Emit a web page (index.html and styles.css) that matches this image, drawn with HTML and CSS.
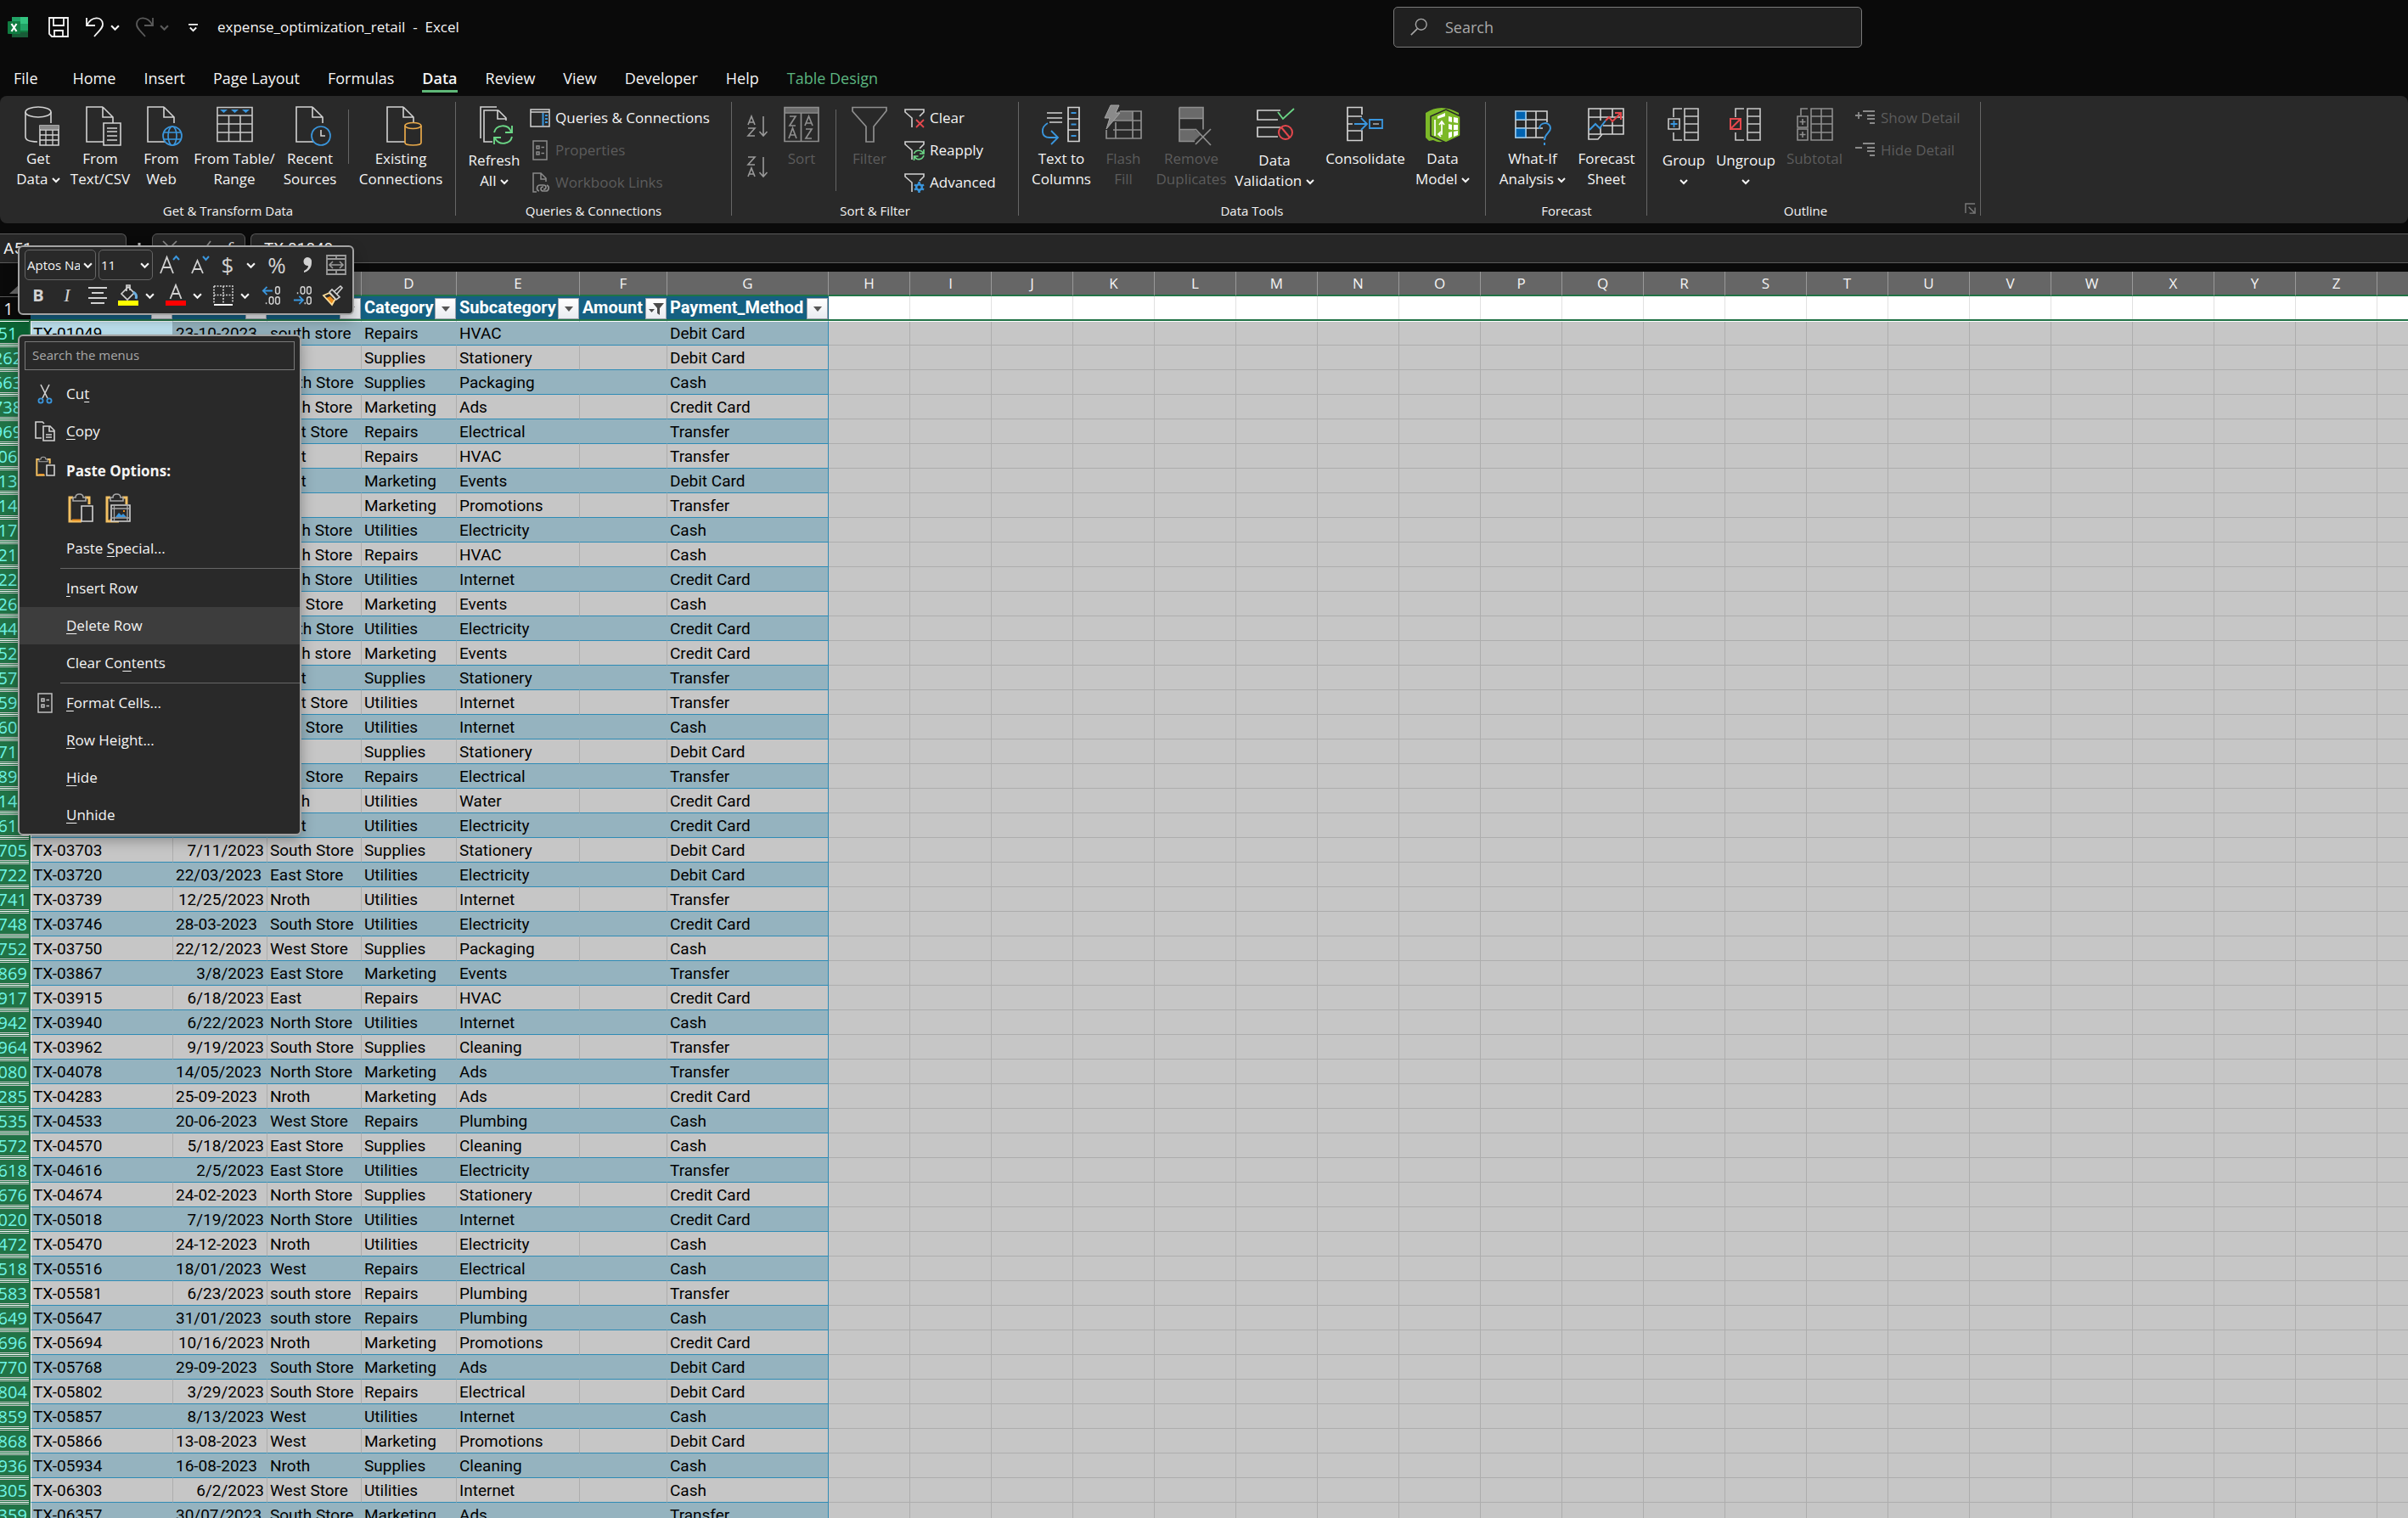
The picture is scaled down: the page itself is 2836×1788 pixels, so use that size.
FILE: index.html
```html
<!DOCTYPE html>
<html lang="en">
<head>
<meta charset="utf-8">
<title>expense_optimization_retail - Excel</title>
<link rel="stylesheet" href="styles.css">
</head>
<body>
<svg class="sprite" aria-hidden="true">
  <symbol id="chev" viewBox="0 0 10 10"><path d="M1 3l4 4 4-4" fill="none" stroke="currentColor" stroke-width="2"/></symbol>
  <symbol id="page" viewBox="0 0 48 48"><path d="M27 2H8v41h21M27 2l12 12v7M27 2v12h12" fill="none" stroke="#d2d2d2" stroke-width="1.6"/></symbol>
  <symbol id="clip" viewBox="0 0 30 36"><path d="M6 6H2v28h14" fill="none" stroke="#f2c063" stroke-width="3"/><path d="M20 6h5v8" fill="none" stroke="#f2c063" stroke-width="3"/><path d="M5 32.500h10" stroke="#e88b1c" stroke-width="2"/><path d="M6 10h15V6h-3q0-4-4.500-4T9 6H6z" fill="#292929" stroke="#a8a8a8" stroke-width="1.600"/></symbol>
  <symbol id="funnel" viewBox="0 0 24 24"><path d="M9 23V12L1 5V2h22v3l-5 5" fill="none" stroke="#d2d2d2" stroke-width="1.600"/></symbol>
</svg>

<header class="titlebar">
  <div class="quick">
    <svg class="logo" viewBox="0 0 24 24"><path d="M5 0h10v8H5z" fill="#21a366"/><path d="M15 0h9v8h-9z" fill="#33c481"/><path d="M5 8h10v8H5z" fill="#107c41"/><path d="M15 8h9v8h-9z" fill="#21a366"/><path d="M5 16h19v8H5z" fill="#185c37"/><path d="M15 16h9v2h-9z" fill="#107c41"/><rect y="5" width="15" height="15" rx="1" fill="#107c41"/><path d="M4.500 8l6 9M10.500 8l-6 9" stroke="#fff" stroke-width="2.200"/></svg>
    <button class="qa save" aria-label="Save"><svg viewBox="0 0 24 24"><path d="M1 1h22v22H4l-3-3zM6 1v9h12V1M7 23v-7h10v7" fill="none" stroke="#f4f4f4" stroke-width="1.800"/></svg></button>
    <button class="qa" aria-label="Undo"><svg viewBox="0 0 24 24"><path d="M2 1v9h10M2.500 9.500C8-1 20-1 21 8c.5 5-4 8-10 15" fill="none" stroke="#f4f4f4" stroke-width="1.800"/></svg></button>
    <button class="drop" aria-label="Undo list"><svg><use href="#chev"/></svg></button>
    <button class="qa off" aria-label="Redo"><svg viewBox="0 0 24 24"><path d="M22 1v9H12M21.500 9.500C16-1 4-1 3 8c-.5 5 4 8 10 15" fill="none" stroke="#5a5a5a" stroke-width="1.800"/></svg></button>
    <button class="drop off" aria-label="Redo list"><svg><use href="#chev"/></svg></button>
    <button class="drop custom" aria-label="Customize toolbar"><svg viewBox="0 0 12 12"><path d="M0 2h12M2 6l4 4 4-4" fill="none" stroke="#f4f4f4" stroke-width="2"/></svg></button>
    <h1>expense_optimization_retail&nbsp; - &nbsp;Excel</h1>
  </div>
  <label class="search"><svg viewBox="0 0 24 24"><ellipse cx="15" cy="8.500" rx="7" ry="7" fill="none" stroke="#a8a8a8" stroke-width="1.500"/><path d="M10 14l-8 8" stroke="#a8a8a8" stroke-width="1.700"/></svg><input type="search" placeholder="Search" aria-label="Search"></label>
</header>

<nav class="tabs">
  <a href="#file" class="file">File</a><a href="#home">Home</a><a href="#insert">Insert</a><a href="#layout">Page Layout</a><a href="#formulas">Formulas</a><a href="#data" class="on">Data</a><a href="#review">Review</a><a href="#view">View</a><a href="#developer">Developer</a><a href="#help">Help</a><a href="#design" class="ctx">Table Design</a>
</nav>

<div class="ribbon">
  <section class="group get">
    <div class="tools">
      <button class="big"><svg viewBox="0 0 48 48"><g fill="none" stroke="#d2d2d2" stroke-width="1.600"><ellipse cx="24" cy="8" rx="15" ry="6"/><path d="M9 8v29c0 4 5 6 14 6M39 8v13"/></g><path d="M26 24h22v23H26z" fill="#292929" stroke="#d2d2d2" stroke-width="1.600"/><path d="M26 24h22v4H26z" fill="#8a8a8a"/><path d="M26 29h22M26 35h22M26 41h22M33 29v18M41 29v18" stroke="#d2d2d2" stroke-width="1.300"/></svg><span>Get<br>Data <svg class="c"><use href="#chev"/></svg></span></button>
      <button class="big"><svg viewBox="0 0 48 48"><use href="#page"/><path d="M28 21h20v26H28z" fill="#292929" stroke="#d2d2d2" stroke-width="1.600"/><path d="M32 27h12M32 31h12M32 36h12M32 41h12" stroke="#d2d2d2" stroke-width="1.300"/></svg><span>From<br>Text/CSV</span></button>
      <button class="big"><svg viewBox="0 0 48 48"><use href="#page"/><g fill="#292929" stroke="#3a96dd" stroke-width="1.700"><circle cx="37" cy="36" r="11"/><ellipse cx="37" cy="36" rx="5" ry="11"/><path d="M27 32h20M27 40h20"/></g></svg><span>From<br>Web</span></button>
      <button class="big"><svg viewBox="0 0 48 48"><path d="M4 2.500h41v40H4zM4 12h41M4 22h41M4 32h41M17.500 12v31M31 12v31" fill="none" stroke="#c8c8c8" stroke-width="1.600"/><path d="M7 5h9l-4.500 4zM20 5h9l-4.500 4zM33 5h9l-4.500 4z" fill="#3a96dd"/></svg><span>From Table/<br>Range</span></button>
      <button class="big"><svg viewBox="0 0 48 48"><use href="#page"/><circle cx="37" cy="36" r="11" fill="#292929" stroke="#3a96dd" stroke-width="1.700"/><path d="M37 29v7h5" fill="none" stroke="#d2d2d2" stroke-width="1.600"/></svg><span>Recent<br>Sources</span></button>
      <i class="bar short"></i>
      <button class="big"><svg viewBox="0 0 48 48"><use href="#page"/><g fill="#292929" stroke="#e8a94a" stroke-width="1.700"><path d="M29 24v20c0 4 19 4 19 0V24"/><ellipse cx="38.500" cy="24" rx="9.500" ry="3.500"/></g></svg><span>Existing<br>Connections</span></button>
    </div>
    <h2>Get &amp; Transform Data</h2>
  </section>

  <section class="group queries">
    <div class="tools">
      <button class="big split"><svg viewBox="0 0 48 48"><g fill="none" stroke="#d2d2d2" stroke-width="1.600"><path d="M27 2H8v37M29 6H12v37h10M29 6l9 9v3M28 6v10h10"/></g><g fill="none" stroke="#6bd686" stroke-width="1.900"><path d="M24 32c2-9 16-11 20-1M45 37c-2 9-15 11-20 2"/><path d="M45 24v8h-8M24 46v-8h8"/></g></svg><span>Refresh<br>All <svg class="c"><use href="#chev"/></svg></span></button>
      <div class="stack">
        <button class="small"><svg viewBox="0 0 24 24"><path d="M1 2h22v20H1zM1 5h22" fill="none" stroke="#d2d2d2" stroke-width="1.500"/><path d="M15.500 6v15" stroke="#3a96dd" stroke-width="2"/><path d="M18 9h3M18 13h3M18 17h3" stroke="#3a96dd" stroke-width="2"/></svg>Queries &amp; Connections</button>
        <button class="small" disabled><svg viewBox="0 0 24 24"><path d="M4 1h16v22H4zM8 7h3v3H8zM8 14h3v3H8zM13.500 8.500H17M13.500 15.500H17" fill="none" stroke="#8a8a8a" stroke-width="1.500"/></svg>Properties</button>
        <button class="small" disabled><svg viewBox="0 0 24 24"><path d="M8 23H4V1h9l6 6v4M13 1v7h6" fill="none" stroke="#8a8a8a" stroke-width="1.500"/><path d="M11 22c-4-1-3-7 1-7h4c4 0 4 5 0 5M20 15c4 2 2 7-1 7h-3c-4 0-4-5 0-5" fill="none" stroke="#8a8a8a" stroke-width="1.700"/></svg>Workbook Links</button>
      </div>
    </div>
    <h2>Queries &amp; Connections</h2>
  </section>

  <section class="group sort">
    <div class="tools">
      <div class="order">
        <button aria-label="Sort A to Z"><svg viewBox="0 0 26 28"><g fill="none" stroke="#9a9a9a" stroke-width="1.600"><path d="M2 12L6 2l4 10M3 9h6M2 16h8l-8 9h8M20 2v22M15.500 20l4.500 5 4.500-5"/></g></svg></button>
        <button aria-label="Sort Z to A"><svg viewBox="0 0 26 28"><g fill="none" stroke="#9a9a9a" stroke-width="1.600"><path d="M2 2h8l-8 9h8M2 25l4-10 4 10M3 22h6M20 2v22M15.500 20l4.500 5 4.500-5"/></g></svg></button>
      </div>
      <button class="big" disabled><svg viewBox="0 0 48 48"><path d="M4 2.500h40v6H4z" fill="#6a6a6a"/><g fill="none" stroke="#8e8e8e" stroke-width="1.700"><path d="M4 2.500h40v40H4zM4 9h40M23.500 9v33"/><path d="M10 13h7l-7 11h7M9 39l4.500-12L18 39M10.500 35h6M28 24l4.500-11L37 24M29.500 21h6M29 28h7l-7 11h7"/></g></svg><span>Sort</span></button>
      <i class="bar"></i>
      <button class="big" disabled><svg viewBox="0 0 48 48"><path d="M4 2.500h40v4L29 25v18h-9V25L4 7z" fill="none" stroke="#8e8e8e" stroke-width="1.700"/></svg><span>Filter</span></button>
      <div class="stack">
        <button class="small"><svg viewBox="0 0 24 24"><use href="#funnel"/><path d="M14 14l9 9M23 14l-9 9" stroke="#e5484d" stroke-width="1.800"/></svg>Clear</button>
        <button class="small"><svg viewBox="0 0 24 24"><use href="#funnel"/><path d="M11.500 16c2-5 9-5 11 0M23 18c-2 6-9 6-11 1M23 11v5h-5M11.500 24v-5h5" fill="none" stroke="#6bd686" stroke-width="1.700"/></svg>Reapply</button>
        <button class="small"><svg viewBox="0 0 24 24"><use href="#funnel"/><circle cx="17.500" cy="17.500" r="3.300" fill="none" stroke="#3a96dd" stroke-width="2.400"/><path d="M17.500 11v3M17.500 21v3M12 14.500l2.500 1.500M20.500 19l2.500 1.500M12 20.500l2.500-1.500M20.500 16l2.500-1.500" stroke="#3a96dd" stroke-width="2.600"/></svg>Advanced</button>
      </div>
    </div>
    <h2>Sort &amp; Filter</h2>
  </section>

  <section class="group data">
    <div class="tools">
      <button class="big"><svg viewBox="0 0 48 48"><path d="M7 9h18M7 15h18M10 20h15M32 2.500h13v40H32zM32 16h13M32 29h13" fill="none" stroke="#d2d2d2" stroke-width="1.700"/><path d="M35.500 9h6M35.500 22.500h6M35.500 36h6M8 21C-1 26 0 38 10 38h9M12 30l8 8-8 8" fill="none" stroke="#3a96dd" stroke-width="1.800"/></svg><span>Text to<br>Columns</span></button>
      <button class="big" disabled><svg viewBox="0 0 48 48"><path d="M18 7h17v11H13z" fill="#6a6a6a"/><path d="M20 7h25v32H4V29M12 18h33M12 29h33M15 20v19M35 7v32" fill="none" stroke="#8e8e8e" stroke-width="1.700"/><path d="M9 0h10l-4 9h5L4 28l4-13H2z" fill="#8a8a8a" stroke="#a5a5a5"/></svg><span>Flash<br>Fill</span></button>
      <button class="big" disabled><svg viewBox="0 0 48 48"><path d="M10 2.500h28v13H10zM10 29h18l7 6-8 7.500H10z" fill="#6a6a6a"/><path d="M10 2.500h28v26M10 2.500v40h18M10 15.500h28M10 28.500h20M29 28l18 19M47 28L29 46" fill="none" stroke="#8e8e8e" stroke-width="1.700"/></svg><span>Remove<br>Duplicates</span></button>
      <button class="big split"><svg viewBox="0 0 48 48"><path d="M31 6H4v11h24M31 26H4v11h24" fill="none" stroke="#d2d2d2" stroke-width="1.700"/><path d="M28 8l6 8L47 4" fill="none" stroke="#6bd686" stroke-width="1.800"/><circle cx="37" cy="32" r="8" fill="none" stroke="#e5484d" stroke-width="2"/><path d="M32 26l10 12" stroke="#e5484d" stroke-width="2"/></svg><span>Data<br>Validation <svg class="c"><use href="#chev"/></svg></span></button>
      <button class="big"><svg viewBox="0 0 48 48"><path d="M20 11V2.500H3v39h17V30H3M3 13h17M3 22h6" fill="none" stroke="#d2d2d2" stroke-width="1.700"/><path d="M11 22h15M19 15l7 7-7 7M29 17h15v10H29z" fill="none" stroke="#3a96dd" stroke-width="1.800"/><path d="M33 22h7" stroke="#a8a8a8" stroke-width="1.600"/></svg><span>Consolidate</span></button>
      <button class="big"><svg viewBox="0 0 48 48"><path d="M4 9q18-12 39 0v26L26 43h-4q-3 1-9-2l-5 1-4-4z" fill="#7cb928"/><path d="M10 13L28 5l17 8v23l-17 8-18-8z" fill="#7cb928" stroke="#292929" stroke-width="1.500"/><path d="M31 13l4 1v6l-4-1zM37 14l5 1v6l-5-1zM31 22l4 1v6l-4-1zM37 23l5 0v6l-5 0zM31 32l4-1v6l-4 2zM37 31l5-1v5l-5 2zM18 13l9-4v4l-9 3z" fill="#fff"/><path d="M15 17v19M20 34h3V20M20 23l3-4 3 4M22 31l-3 3 3 3" fill="none" stroke="#fff" stroke-width="1.700"/></svg><span>Data<br>Model <svg class="c"><use href="#chev"/></svg></span></button>
    </div>
    <h2>Data Tools</h2>
  </section>

  <section class="group forecast">
    <div class="tools">
      <button class="big"><svg viewBox="0 0 48 48"><path d="M41 20V7H4v31h33M4 17h37M4 27h32M28 7v31M16 7v31" fill="none" stroke="#d2d2d2" stroke-width="1.600"/><path d="M4 7h12v10H4zM4 27h12v11H4z" fill="#0063b1" stroke="#8fc4ea" stroke-width="1.600"/><path d="M32 28c0-9 13-9 13-1 0 6-7 6-7 14M38 44v3" fill="none" stroke="#3a96dd" stroke-width="2"/></svg><span>What-If<br>Analysis <svg class="c"><use href="#chev"/></svg></span></button>
      <button class="big"><svg viewBox="0 0 48 48"><path d="M3 4h41v30H3zM3 14h41M17 4v14M31 4v10M31 20v14M17 26v8M20 24h24M3 34v6h11l5-6" fill="none" stroke="#d2d2d2" stroke-width="1.600"/><path d="M4 29l7-7 5 5 7-9" fill="none" stroke="#3a96dd" stroke-width="2"/><path d="M23 18l4-4 4 5 10-10M34 9h7v8" fill="none" stroke="#e5484d" stroke-width="2"/></svg><span>Forecast<br>Sheet</span></button>
    </div>
    <h2>Forecast</h2>
  </section>

  <section class="group outline">
    <div class="tools">
      <button class="big split"><svg viewBox="0 0 48 48"><path d="M25 4h16v37H25zM25 13h16M25 22h16M25 32h16M22 4H12v10M12 32v9h10M6 16h13v12H6z" fill="none" stroke="#c8c8c8" stroke-width="1.600"/><path d="M12.500 18v8M8.500 22h8" stroke="#3a96dd" stroke-width="1.800"/></svg><span>Group<br><svg class="c"><use href="#chev"/></svg></span></button>
      <button class="big split"><svg viewBox="0 0 48 48"><path d="M26 4h15v37H26zM26 13h15M26 22h15M26 32h15M22 4H12v10M12 32v9h10" fill="none" stroke="#c8c8c8" stroke-width="1.600"/><path d="M6 16h12v12H6zM6 28l12-12" fill="none" stroke="#e5484d" stroke-width="2"/></svg><span>Ungroup<br><svg class="c"><use href="#chev"/></svg></span></button>
      <button class="big" disabled><svg viewBox="0 0 48 48"><path d="M20 4h25v37H20zM20 13h25M20 22h25M20 32h25M32 4v37M16 4H8v8M4 13h12v13H4zM4 28h12v13H4zM10 16v7M6.500 19.500h7M10 31v7M6.500 34.500h7" fill="none" stroke="#8e8e8e" stroke-width="1.600"/></svg><span>Subtotal</span></button>
      <div class="stack">
        <button class="small" disabled><svg viewBox="0 0 24 24"><path d="M0 9h8M4 5v8M9 4h14M14 9h9M14 13h9M17 18h6" stroke="#8a8a8a" stroke-width="1.800"/></svg>Show Detail</button>
        <button class="small" disabled><svg viewBox="0 0 24 24"><path d="M0 9h8M9 4h14M14 9h9M14 13h9M17 18h6" stroke="#8a8a8a" stroke-width="1.800"/></svg>Hide Detail</button>
      </div>
    </div>
    <h2>Outline</h2>
    <button class="launch" aria-label="Outline settings"><svg viewBox="0 0 14 14"><path d="M1 13V1h12M5 5l7 7M13 6v7H6" fill="none" stroke="#7a7a7a" stroke-width="1.500"/></svg></button>
  </section>
</div>

<div class="formula">
  <input class="name" value="A51" aria-label="Name box">
  <svg class="dots" viewBox="0 0 6 24"><path d="M3 2v3M3 10v3M3 18v3" stroke="#b8b8b8" stroke-width="3"/></svg>
  <div class="fx"><svg viewBox="0 0 100 30"><path d="M8 6l16 16M24 6L8 22M46 15l6 7L64 6" fill="none" stroke="#8a8a8a" stroke-width="1.700"/></svg><em>fx</em></div>
  <input class="value" value="TX-01049" aria-label="Formula">
</div>

<main class="sheet">
<table>
<colgroup><col class="w-row"><col class="w-a"><col class="w-b"><col class="w-b"><col class="w-d"><col class="w-e"><col class="w-f"><col class="w-g"><col span="20" class="w-x"></colgroup>
<thead>
<tr class="letters"><th class="corner"><svg viewBox="0 0 24 24"><path d="M24 2v22H0z" fill="#666"/></svg><th>A<th>B<th>C<th>D<th>E<th>F<th>G<th>H<th>I<th>J<th>K<th>L<th>M<th>N<th>O<th>P<th>Q<th>R<th>S<th>T<th>U<th>V<th>W<th>X<th>Y<th>Z<th></tr>
<tr class="fields"><th>1<th><div>Transaction_ID<button aria-label="Filter"></button></div><th><div>Date<button aria-label="Filter"></button></div><th><div>Store<button aria-label="Filter"></button></div><th><div>Category<button aria-label="Filter"></button></div><th><div>Subcategory<button aria-label="Filter"></button></div><th><div>Amount<button class="active" aria-label="Filtered"><svg viewBox="0 0 20 20"><path d="M6 3h13l-5 6v8l-3-2V9zM1 10h7l-3.500 4z" fill="#4a4a4a"/></svg></button></div><th><div>Payment_Method<button aria-label="Filter"></button></div><td colspan="20"></tr>
</thead>
<tbody>
<tr class="first"><th>51<td class="cur">TX-01049<td>23-10-2023<td>south store<td>Repairs<td>HVAC<td><td>Debit Card<td colspan="20">
<tr><th>262<td><td><td>East<td>Supplies<td>Stationery<td><td>Debit Card<td colspan="20">
<tr><th>663<td><td><td>South Store<td>Supplies<td>Packaging<td><td>Cash<td colspan="20">
<tr><th>738<td><td><td>North Store<td>Marketing<td>Ads<td><td>Credit Card<td colspan="20">
<tr><th>969<td><td><td>West Store<td>Repairs<td>Electrical<td><td>Transfer<td colspan="20">
<tr><th>1061<td><td><td>West<td>Repairs<td>HVAC<td><td>Transfer<td colspan="20">
<tr><th>1130<td><td><td>West<td>Marketing<td>Events<td><td>Debit Card<td colspan="20">
<tr><th>1142<td><td><td>East<td>Marketing<td>Promotions<td><td>Transfer<td colspan="20">
<tr><th>1170<td><td><td>North Store<td>Utilities<td>Electricity<td><td>Cash<td colspan="20">
<tr><th>1210<td><td><td>North Store<td>Repairs<td>HVAC<td><td>Cash<td colspan="20">
<tr><th>1220<td><td><td>North Store<td>Utilities<td>Internet<td><td>Credit Card<td colspan="20">
<tr><th>1262<td><td><td>East Store<td>Marketing<td>Events<td><td>Cash<td colspan="20">
<tr><th>1443<td><td><td>South Store<td>Utilities<td>Electricity<td><td>Credit Card<td colspan="20">
<tr><th>1520<td><td><td>south store<td>Marketing<td>Events<td><td>Credit Card<td colspan="20">
<tr><th>1571<td><td><td>West<td>Supplies<td>Stationery<td><td>Transfer<td colspan="20">
<tr><th>1590<td><td><td>West Store<td>Utilities<td>Internet<td><td>Transfer<td colspan="20">
<tr><th>1600<td><td><td>East Store<td>Utilities<td>Internet<td><td>Cash<td colspan="20">
<tr><th>1710<td><td><td>East<td>Supplies<td>Stationery<td><td>Debit Card<td colspan="20">
<tr><th>1890<td><td><td>East Store<td>Repairs<td>Electrical<td><td>Transfer<td colspan="20">
<tr><th>2143<td><td><td>Nroth<td>Utilities<td>Water<td><td>Credit Card<td colspan="20">
<tr><th>2612<td><td><td>West<td>Utilities<td>Electricity<td><td>Credit Card<td colspan="20">
<tr><th>2705<td>TX-03703<td class="n">7/11/2023<td>South Store<td>Supplies<td>Stationery<td><td>Debit Card<td colspan="20">
<tr><th>2722<td>TX-03720<td>22/03/2023<td>East Store<td>Utilities<td>Electricity<td><td>Debit Card<td colspan="20">
<tr><th>2741<td>TX-03739<td class="n">12/25/2023<td>Nroth<td>Utilities<td>Internet<td><td>Transfer<td colspan="20">
<tr><th>2748<td>TX-03746<td>28-03-2023<td>South Store<td>Utilities<td>Electricity<td><td>Credit Card<td colspan="20">
<tr><th>2752<td>TX-03750<td>22/12/2023<td>West Store<td>Supplies<td>Packaging<td><td>Cash<td colspan="20">
<tr><th>2869<td>TX-03867<td class="n">3/8/2023<td>East Store<td>Marketing<td>Events<td><td>Transfer<td colspan="20">
<tr><th>2917<td>TX-03915<td class="n">6/18/2023<td>East<td>Repairs<td>HVAC<td><td>Credit Card<td colspan="20">
<tr><th>2942<td>TX-03940<td class="n">6/22/2023<td>North Store<td>Utilities<td>Internet<td><td>Cash<td colspan="20">
<tr><th>2964<td>TX-03962<td class="n">9/19/2023<td>South Store<td>Supplies<td>Cleaning<td><td>Transfer<td colspan="20">
<tr><th>3080<td>TX-04078<td>14/05/2023<td>North Store<td>Marketing<td>Ads<td><td>Transfer<td colspan="20">
<tr><th>3285<td>TX-04283<td>25-09-2023<td>Nroth<td>Marketing<td>Ads<td><td>Credit Card<td colspan="20">
<tr><th>3535<td>TX-04533<td>20-06-2023<td>West Store<td>Repairs<td>Plumbing<td><td>Cash<td colspan="20">
<tr><th>3572<td>TX-04570<td class="n">5/18/2023<td>East Store<td>Supplies<td>Cleaning<td><td>Cash<td colspan="20">
<tr><th>3618<td>TX-04616<td class="n">2/5/2023<td>East Store<td>Utilities<td>Electricity<td><td>Transfer<td colspan="20">
<tr><th>3676<td>TX-04674<td>24-02-2023<td>North Store<td>Supplies<td>Stationery<td><td>Credit Card<td colspan="20">
<tr><th>4020<td>TX-05018<td class="n">7/19/2023<td>North Store<td>Utilities<td>Internet<td><td>Credit Card<td colspan="20">
<tr><th>4472<td>TX-05470<td>24-12-2023<td>Nroth<td>Utilities<td>Electricity<td><td>Cash<td colspan="20">
<tr><th>4518<td>TX-05516<td>18/01/2023<td>West<td>Repairs<td>Electrical<td><td>Cash<td colspan="20">
<tr><th>4583<td>TX-05581<td class="n">6/23/2023<td>south store<td>Repairs<td>Plumbing<td><td>Transfer<td colspan="20">
<tr><th>4649<td>TX-05647<td>31/01/2023<td>south store<td>Repairs<td>Plumbing<td><td>Cash<td colspan="20">
<tr><th>4696<td>TX-05694<td class="n">10/16/2023<td>Nroth<td>Marketing<td>Promotions<td><td>Credit Card<td colspan="20">
<tr><th>4770<td>TX-05768<td>29-09-2023<td>South Store<td>Marketing<td>Ads<td><td>Debit Card<td colspan="20">
<tr><th>4804<td>TX-05802<td class="n">3/29/2023<td>South Store<td>Repairs<td>Electrical<td><td>Debit Card<td colspan="20">
<tr><th>4859<td>TX-05857<td class="n">8/13/2023<td>West<td>Utilities<td>Internet<td><td>Cash<td colspan="20">
<tr><th>4868<td>TX-05866<td>13-08-2023<td>West<td>Marketing<td>Promotions<td><td>Debit Card<td colspan="20">
<tr><th>4936<td>TX-05934<td>16-08-2023<td>Nroth<td>Supplies<td>Cleaning<td><td>Cash<td colspan="20">
<tr><th>5305<td>TX-06303<td class="n">6/2/2023<td>West Store<td>Utilities<td>Internet<td><td>Cash<td colspan="20">
<tr><th>5359<td>TX-06357<td>30/07/2023<td>South Store<td>Marketing<td>Ads<td><td>Transfer<td colspan="20">
</tbody>
</table>
</main>

<div class="mini">
  <div class="line">
    <label class="pick font"><select aria-label="Font"><option>Aptos Narrow</option></select><svg><use href="#chev"/></svg></label>
    <label class="pick size"><select aria-label="Font size"><option>11</option></select><svg><use href="#chev"/></svg></label>
    <button aria-label="Increase font size"><svg viewBox="0 0 24 24"><path d="M1 22L8.500 3 16 22M4 15h9" fill="none" stroke="#d2d2d2" stroke-width="1.800"/><path d="M16 6l3.500-4L23 6" fill="none" stroke="#3a96dd" stroke-width="2"/></svg></button>
    <button aria-label="Decrease font size"><svg viewBox="0 0 24 24"><path d="M2 22L8.500 7 15 22M4.500 17h8" fill="none" stroke="#d2d2d2" stroke-width="1.800"/><path d="M15 2l3.500 4L22 2" fill="none" stroke="#3a96dd" stroke-width="2"/></svg></button>
    <button class="cur-fmt sym" aria-label="Accounting format">$</button>
    <button class="dropw" aria-label="Currency list"><svg><use href="#chev"/></svg></button>
    <button class="sym" aria-label="Percent">%</button>
    <button class="sym comma" aria-label="Comma style"><svg viewBox="0 0 24 24"><path d="M12 3a5 5 0 0 1 5 6c0 6-3 10-9 12v-2c4-2 5-4 5-6A5 5 0 1 1 12 3z" fill="#d2d2d2"/></svg></button>
    <button class="merge" aria-label="Merge and center"><svg viewBox="0 0 24 24"><path d="M1 1h22v22H1zM1 5h22M1 18h22M12 1v4M12 18v5" fill="none" stroke="#9a9a9a" stroke-width="1.800"/><path d="M5 12h14M8 8l-4 4 4 4M16 8l4 4-4 4" fill="none" stroke="#9a9a9a" stroke-width="1.600"/></svg></button>
  </div>
  <div class="line">
    <button class="bold" aria-label="Bold">B</button>
    <button class="ital" aria-label="Italic">I</button>
    <button aria-label="Center"><svg viewBox="0 0 24 24"><path d="M1 3h22M5 9h14M1 15h22M4 21h16" stroke="#d2d2d2" stroke-width="1.800"/></svg></button>
    <button aria-label="Fill color"><svg viewBox="0 0 24 24"><path d="M4 10l8-8 7 7-8 8zM10 7V0h4v6" fill="none" stroke="#d2d2d2" stroke-width="1.700"/><path d="M18 8q5 3 3 8" fill="none" stroke="#6aaee0" stroke-width="3"/><path d="M0 18h24v6H0z" fill="#ff0"/></svg></button>
    <button class="dropn" aria-label="Fill colors"><svg><use href="#chev"/></svg></button>
    <button aria-label="Font color"><svg viewBox="0 0 24 24"><path d="M5.500 16L12 0l6.500 16M8 10h8" fill="none" stroke="#d2d2d2" stroke-width="1.800"/><path d="M0 18h24v6H0z" fill="red"/></svg></button>
    <button class="dropn" aria-label="Font colors"><svg><use href="#chev"/></svg></button>
    <button aria-label="Borders"><svg viewBox="0 0 24 24"><path d="M1 1h22v20M1 1v20M12 1v20M1 11.500h22" fill="none" stroke="#d2d2d2" stroke-width="1.600" stroke-dasharray="2 1.500"/><path d="M1 23h22" stroke="#f4f4f4" stroke-width="2"/></svg></button>
    <button class="dropn" aria-label="Border list"><svg><use href="#chev"/></svg></button>
    <button class="dec" aria-label="Increase decimal"><svg viewBox="0 0 24 26"><path d="M13 7H1M6 2L1 7l5 5" fill="none" stroke="#3a96dd" stroke-width="2"/><g fill="none" stroke="#d2d2d2" stroke-width="1.600"><rect x="17" y="2" width="5" height="9" rx="2.500"/><rect x="9" y="15" width="5" height="9" rx="2.500"/><rect x="17" y="15" width="5" height="9" rx="2.500"/><path d="M5 24v-2"/></g></svg></button>
    <button aria-label="Decrease decimal"><svg viewBox="0 0 24 26"><path d="M0 19h12M7 14l5 5-5 5" fill="none" stroke="#3a96dd" stroke-width="2"/><g fill="none" stroke="#d2d2d2" stroke-width="1.600"><rect x="9" y="2" width="5" height="9" rx="2.500"/><rect x="17" y="2" width="5" height="9" rx="2.500"/><rect x="17" y="15" width="5" height="9" rx="2.500"/><path d="M5 11V9M14.500 24v-2"/></g></svg></button>
    <button class="brush" aria-label="Format painter"><svg viewBox="0 0 24 24"><path d="M4 15l5-2 5 5-3 5z" fill="#e88b1c"/><path d="M1 12l7-3 7 7-4 7z" fill="none" stroke="#ffdf9a" stroke-width="1.800"/><path d="M8 8l3-3 9 9-4 3zM14 7l7-6 2 2-6 7" fill="#292929" stroke="#d2d2d2" stroke-width="1.600"/></svg></button>
  </div>
</div>

<div class="menu">
  <input type="search" placeholder="Search the menus" aria-label="Search the menus">
  <button class="item"><svg viewBox="0 0 24 24"><path d="M7 1l8 16M17 1L9 17" stroke="#d2d2d2" stroke-width="1.600"/><g fill="none" stroke="#3a96dd" stroke-width="1.800"><circle cx="7" cy="20" r="2.600"/><circle cx="17" cy="20" r="2.600"/></g></svg><span>Cu<u>t</u></span></button>
  <button class="item"><svg viewBox="0 0 24 24"><path d="M8 20H1V1h8l2 2M10 6h8l5 5v12H10zM17 6v6h6M13 16h7M13 19h7" fill="none" stroke="#d2d2d2" stroke-width="1.600"/></svg><span><u>C</u>opy</span></button>
  <div class="item head"><svg viewBox="0 0 24 24"><use href="#clip" width="22" height="24"/><path d="M14 11h9v12h-9z" fill="#292929" stroke="#d2d2d2" stroke-width="1.600"/></svg><strong>Paste Options:</strong></div>
  <div class="paste">
    <button aria-label="Paste"><svg viewBox="0 0 30 36"><use href="#clip"/><path d="M16 16h13v18H16z" fill="#292929" stroke="#d2d2d2" stroke-width="1.600"/></svg></button>
    <button aria-label="Paste picture"><svg viewBox="0 0 30 36"><use href="#clip"/><path d="M7 15h22v19H7z" fill="#292929" stroke="#d2d2d2" stroke-width="1.600"/><path d="M7 19h22M7 30h22M10.500 15v19M26 15v19" stroke="#a8a8a8" stroke-width="1.300"/><path d="M12 29l4-5 3 3 2-2 4 4z" fill="#3a96dd"/><path d="M21 21h2v2h-2z" fill="#e88b1c"/></svg></button>
  </div>
  <button class="item"><span>Paste <u>S</u>pecial...</span></button>
  <hr>
  <button class="item"><span><u>I</u>nsert Row</span></button>
  <button class="item hover"><span><u>D</u>elete Row</span></button>
  <button class="item"><span>Clear Co<u>n</u>tents</span></button>
  <hr>
  <button class="item"><svg viewBox="0 0 24 24"><path d="M4 1h16v22H4zM8 7h3v3H8zM8 14h3v3H8zM13.500 8.500H17M13.500 15.500H17" fill="none" stroke="#c0c0c0" stroke-width="1.500"/></svg><span><u>F</u>ormat Cells...</span></button>
  <button class="item"><span><u>R</u>ow Height...</span></button>
  <button class="item"><span><u>H</u>ide</span></button>
  <button class="item"><span><u>U</u>nhide</span></button>
</div>
</body>
</html>
```
FILE: styles.css
```css
* { box-sizing: border-box; }
html { height: 100%; }
body {
  margin: 0;
  height: 100vh;
  display: flex;
  flex-direction: column;
  overflow: hidden;
  position: relative;
  background: #0a0a0a;
  color: #f4f4f4;
  font: 17px/24px "Open Sans", "Noto Sans", sans-serif;
}
button, input, select { font: inherit; color: inherit; border: 0; padding: 0; margin: 0; background: none; }
button { display: inline-flex; align-items: center; justify-content: center; }
svg { flex: none; overflow: visible; }
h1, h2 { margin: 0; font-weight: 400; }
.sprite { position: absolute; width: 0; height: 0; }

/* title bar */
.titlebar { display: grid; grid-template-columns: 1641fr 552px 643fr; height: 64px; padding-top: 8px; flex: none; }
.quick { display: flex; align-items: center; height: 48px; padding-left: 9px; }
.logo { width: 24px; height: 24px; margin-right: 24px; }
.qa svg { width: 24px; height: 24px; }
.qa { width: 24px; }
.save { margin-right: 19px; }
.drop { width: 22px; }
.drop svg { width: 11px; height: 11px; }
.drop:not(.custom) { margin-right: 12px; }
.drop.off { color: #5a5a5a; }
.custom { margin-right: 16px; }
h1 { font-size: 17px; padding-left: 2px; white-space: pre; }
.search { display: flex; align-items: center; height: 48px; padding: 0 18px; gap: 20px; border: 1px solid #7a7a7a; border-radius: 5px; background: #202020; }
.search svg { width: 22px; height: 22px; }
.search input { flex: 1; font-size: 18px; outline: 0; }
::placeholder { color: #a8a8a8; opacity: 1; }

/* tabs */
.tabs { display: flex; height: 49px; flex: none; font-size: 18px; line-height: 28px; padding: 14px 0 0 16px; gap: 33px; }
.tabs a { color: #f4f4f4; text-decoration: none; height: 31px; }
.tabs .file { margin-right: 8px; }
.tabs .on { font-weight: 600; border-bottom: 3px solid #5fb878; }
.tabs .ctx { color: #5cb580; }

/* ribbon */
.ribbon { display: flex; flex: none; height: 150px; padding: 7px 0 9px; background: #292929; border-radius: 8px; }
.group { display: grid; grid-template-rows: 117px 17px; grid-template-columns: 1fr auto; padding-left: 8px; border-right: 1px solid #666; flex: none; }
.get { width: 537px; padding-left: 9px; }
.queries { width: 325px; }
.sort { width: 338px; }
.data { width: 550px; }
.forecast { width: 190px; padding-left: 9px; }
.outline { width: 393px; }
.tools { display: grid; grid-column: 1 / -1; }
.get .tools { grid-template-columns: 72px 74px 70px 102px 76px 14px 110px; }
.queries .tools { grid-template-columns: 74px 1fr; }
.sort .tools { grid-template-columns: 44px 60px 20px 60px 1fr; }
.data .tools { grid-template-columns: 84px 62px 98px 98px 116px 66px; }
.forecast .tools { grid-template-columns: 92px 82px; }
.outline .tools { grid-template-columns: 70px 76px 86px 1fr; }
.group h2 { font-size: 15px; line-height: 22px; text-align: center; padding-right: 8px; }
.big { flex-direction: column; justify-content: flex-start; padding-top: 4px; white-space: nowrap; text-align: center; }
.big > svg { width: 48px; height: 48px; margin-bottom: 3px; }
.split > svg { margin-bottom: 5px; }
.c { width: 10px; height: 10px; }
button:disabled { color: #5c5c5c; }
.stack { display: flex; flex-direction: column; padding-left: 5px; }
.sort .stack { padding-left: 11px; }
.small { height: 38px; gap: 6px; justify-content: flex-start; }
.small svg { width: 24px; height: 24px; }
.order { display: flex; flex-direction: column; padding-top: 5px; }
.order button { height: 48px; }
.order svg { width: 26px; height: 28px; }
.bar { width: 1px; background: #666; margin: 9px auto 12px; }
.short { margin-bottom: 44px; }
.launch { width: 14px; height: 17px; margin-right: 5px; }
.launch svg { width: 13px; height: 13px; }

/* formula bar */
.formula { display: flex; flex: none; height: 57px; padding: 12px 0 10px; font: 19px/24px Roboto, sans-serif; }
.formula > *:not(.dots) { height: 35px; border: 1px solid #5a5a5a; border-radius: 6px; background: #262626; }
.formula .name { width: 149px; padding-left: 4px; border-left: 0; border-radius: 0 6px 6px 0; }
.dots { width: 6px; height: 24px; margin: 9px 12px 0; }
.fx { display: flex; width: 110px; align-items: center; padding-left: 4px; }
.fx svg { width: 100px; height: 30px; margin-right: -18px; }
.fx em { font: italic 24px/24px "Liberation Serif", serif; color: #d2d2d2; }
.formula .value { flex: 1; margin-left: 6px; padding-left: 15px; border-right: 0; border-radius: 6px 0 0 6px; }

/* worksheet, scrolled so that the row numbers are cut at the left edge */
.sheet { flex: 1; min-height: 0; overflow: hidden; margin-left: -16px; font: 19px/27px Roboto, sans-serif; color: #000; }
table { table-layout: fixed; border-spacing: 0; width: 2912px; }
.w-row { width: 52px; }
.w-a { width: 168px; }
.w-b { width: 111px; }
.w-d { width: 112px; }
.w-e { width: 145px; }
.w-f { width: 103px; }
.w-g { width: 190px; }
.w-x { width: 96px; }
th, td { height: 29px; padding: 0 0 0 3px; line-height: 25px; white-space: nowrap; overflow: hidden; text-align: left; }
.letters th { background: #666; color: #f4f4f4; font: 17px/27px "Open Sans", sans-serif; text-align: center; padding: 0; border-right: 1px solid #999; border-bottom: 2px solid #217346; }
.letters .corner { background: #0a0a0a; border-color: #0a0a0a; text-align: right; }
.corner svg { width: 24px; height: 24px; display: block; margin-left: auto; }
.fields th { background: #156082; color: #fff; font-size: 20px; font-weight: 700; line-height: 27px; border-bottom: 2px solid #217346; }
.fields div { display: flex; justify-content: space-between; align-items: flex-end; padding-right: 1px; }
.fields button { width: 25px; height: 25px; background: linear-gradient(#fff, #e9ebf0); border: 1px solid #a0a4ae; flex: none; }
.fields button:not(.active)::after { content: ""; border: 5px solid transparent; border-top: 6px solid #555; border-bottom: 0; }
.active svg { width: 20px; height: 20px; }
.fields td { background: repeating-linear-gradient(to right, #fff 0 95px, #e1e1e1 95px 96px); border-bottom: 2px solid #217346; }
.fields th:first-child { background: #0a0a0a; color: #f4f4f4; border-top: 1px solid #5a5a5a; }
tr > th:first-child { font: 20px/25px "Open Sans", sans-serif; text-align: center; padding: 0; }
tbody th { color: #6ff5e6; border-right: 2px solid #217346; background: linear-gradient(#217346 0 1px, #c6c6c6 1px 2px, #217346 2px 26px, #c6c6c6 26px 27px, #217346 27px 28px, #fff 28px); }
tbody .first th { background: linear-gradient(#fff 0 1px, #0c6434 1px 26px, #c6c6c6 26px 27px, #217346 27px 28px, #fff 28px); }
tbody td { background: #c6c6c6; border-right: 1px solid #adadad; border-bottom: 1px solid #2e8bb5; }
tbody tr:nth-child(odd) td { background-color: #95b3bf; border-right-color: #95b3bf; }
tbody td:nth-child(2) { border-left: 1px solid #fff; padding-left: 2px; }
tbody tr td:nth-child(8) { border-right-color: #2e8bb5; }
tbody tr td:last-child, tbody tr:nth-child(odd) td:last-child { background: repeating-linear-gradient(to right, #c6c6c6 0 95px, #adadad 95px 96px); border-right: 0; border-bottom-color: #adadad; }
.first td { border-top: 1px solid #fff; }
tbody tr.first .cur { background: #bfe3f1; }
.n { text-align: right; padding-right: 3px; }

/* floating mini toolbar */
.mini, .menu { position: absolute; left: 21px; background: #292929; border: 2px solid #a3a3a3; border-radius: 6px; box-shadow: 0 6px 16px rgba(0, 0, 0, .3); }
.mini { top: 289px; width: 396px; height: 82px; padding: 3px 0 0 6px; }
.line { display: flex; height: 36px; }
.line button { width: 36px; }
.line button svg { width: 24px; height: 24px; }
.line .dropn svg, .line .dropw svg { width: 11px; height: 11px; }
.line .dropn { width: 14px; margin-right: 6px; }
.line .dropw { width: 26px; }
.line .cur-fmt { width: 28px; }
.line .merge { width: 32px; }
.line .bold { width: 32px; font-size: 20px; font-weight: 700; color: #d2d2d2; }
.ital { font: italic 22px/24px "Liberation Serif", serif; color: #d2d2d2; }
.line .dec { width: 38px; }
.line .brush { width: 34px; }
.sym { font-size: 26px; color: #d2d2d2; }
.pick { display: grid; grid-template-columns: 1fr 18px; border: 1px solid #666; border-radius: 5px; align-items: center; }
.pick select { grid-area: 1 / 1 / 2 / 2; appearance: none; outline: 0; width: 100%; height: 34px; padding-left: 2px; font-size: 15px; text-overflow: clip; overflow: hidden; }
.pick svg { width: 11px; height: 11px; justify-self: end; margin-right: 3px; }
.font { width: 84px; margin-right: 3px; }
.size { width: 64px; margin-right: 2px; }

/* row context menu */
.menu { top: 394px; width: 334px; display: flex; flex-direction: column; }
.menu input { height: 34px; margin: 6px; padding: 0 8px 2px; border: 1px solid #7a7a7a; font-size: 15px; outline: 0; }
.item { display: grid; grid-template-columns: 24px 1fr; column-gap: 13px; height: 44px; padding-left: 18px; text-align: left; align-items: center; }
.item span { grid-column: 2; }
.item svg { width: 24px; height: 24px; }
.item u { text-underline-offset: 3px; }
.head { height: 50px; }
.head svg { align-self: start; margin-top: 7px; }
.hover { background: #3d3d3d; }
.paste { display: flex; height: 44px; padding-left: 54px; gap: 8px; align-items: flex-start; }
.paste button { width: 36px; height: 36px; }
.paste svg { width: 30px; height: 36px; }
.menu hr { border: 0; height: 1px; margin: 1px 0 1px 48px; background: #666; }
```
